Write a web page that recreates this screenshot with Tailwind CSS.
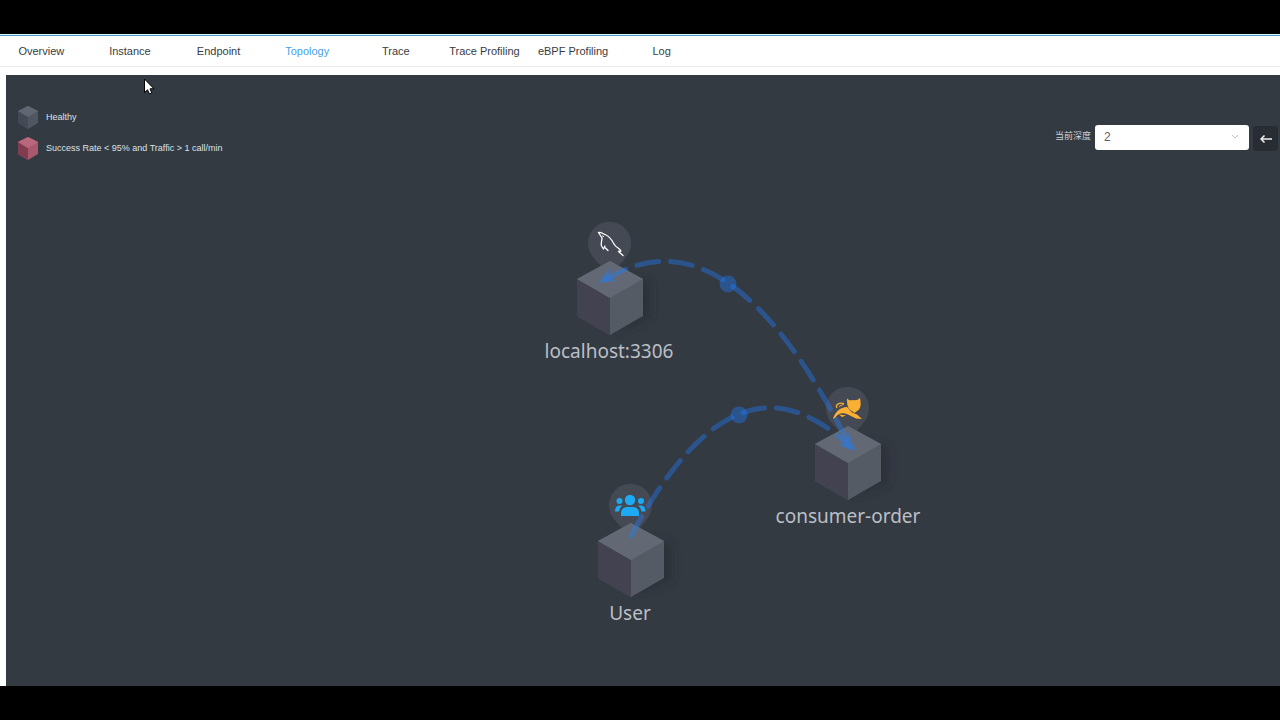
<!DOCTYPE html>
<html lang="en">
<head>
<meta charset="utf-8">
<meta name="viewport" content="width=device-width, initial-scale=1">
<title>Topology</title>
<script src="https://cdn.jsdelivr.net/npm/@tailwindcss/browser@4"></script>
</head>
<body class="bg-black font-['Liberation_Sans','Noto_Sans_CJK_SC',sans-serif]">
<div class="flex min-h-screen flex-col py-[34px]">
  <div class="flex flex-1 flex-col overflow-hidden border-t border-[#d5f5fa] bg-white">
    <nav class="border-t border-b border-t-[#4f9fca] border-b-[#e8eaec]">
      <div class="-ml-[3px] grid h-[30px] w-[709px] grid-cols-8 items-center text-center text-[11px] whitespace-nowrap text-[#383c42]">
        <a href="#">Overview</a>
        <a href="#">Instance</a>
        <a href="#">Endpoint</a>
        <a href="#" class="text-[#4a9fe8]" aria-current="page">Topology</a>
        <a href="#">Trace</a>
        <a href="#">Trace Profiling</a>
        <a href="#">eBPF Profiling</a>
        <a href="#">Log</a>
      </div>
    </nav>

    <main class="relative mt-2 ml-[6px] flex-1 bg-[#333a42]">
      <!-- Topology canvas -->
      <svg class="absolute inset-0 h-full w-full" role="img" aria-label="Service topology">
        <defs>
          <filter id="soft" x="-50%" y="-50%" width="200%" height="200%"><feGaussianBlur stdDeviation="4"/></filter>
          <g id="node">
            <path d="M8 -22L40 -17V20L8 33Z" fill="#292d36" opacity=".75" filter="url(#soft)"/>
            <path d="M0 -22C-5 -30 -12 -34 -17 -41A21.500 21.500 0 1 1 16 -41C12 -34 5 -30 0 -22Z" fill="#454953"/>
            <path d="M0 -37L33 -19V18L0 37L-33 18V-19Z" fill="#555b65"/>
            <path d="M-33 -19L0 0V37L-33 18Z" fill="#434251"/>
            <path d="M0 -37L33 -19L0 0L-33 -19Z" fill="#626974"/>
          </g>
        </defs>
        <g transform="translate(-6 -75)">
          <use href="#node" x="610" y="298"/>
          <use href="#node" x="848" y="463"/>
          <use href="#node" x="631" y="560"/>

          <!-- Database icon -->
          <g fill="none" stroke="#fff" stroke-width="1.300" stroke-linecap="round" stroke-linejoin="round">
            <path d="M598.500 232.500C601 231.500 603 234 605 234.500C609 236 612 240 614 244C616 248 620 248 621 251L618.500 251.500L623 255.500"/>
            <path d="M598.500 232.500L602 238C602 241 600.500 243 601.500 246L603.500 249L605 246M605.500 248L608 250.500"/>
            <path d="M602.500 236L603.500 236.500" stroke-width="1"/>
          </g>
          <!-- Application icon -->
          <g fill="#fbb034">
            <path d="M847 398.500C849 400.500 851 400.500 853 400C856 400.500 858 400 860 398C861 403 861 407 859 409.500L854.500 413L849 409C847 406 847 402 847 398.500Z"/>
            <path d="M833 419C835 412 840 407 847 407L852 412.500L857 414.500L862 419L856 418.500L849 415C843 412 838 413 835 418Z"/>
            <path d="M837 408C835 405 839 402 844 403.500" fill="none" stroke="#fbb034" stroke-width="1.200"/>
            <path d="M839 406.500L844 404" stroke="#fbb034" stroke-width="1"/>
            <path d="M839 414.500L846 415.500L842 417Z"/>
          </g>
          <!-- User group icon -->
          <g fill="#1daaf4">
            <circle cx="630" cy="500" r="5.200"/>
            <circle cx="619.500" cy="501" r="3"/>
            <circle cx="641" cy="501" r="3"/>
            <path d="M621 516V513C621 509 624 507 627 507H633C636 507 639 509 639 513V516Z"/>
            <path d="M615 511.500C615 507.500 617 505.500 619 505.500H622.500C620.500 507 619.500 509 619 511.500Z"/>
            <path d="M645.500 511.500C645.500 507.500 643.500 505.500 641.500 505.500H638C640 507 641 509 641.500 511.500Z"/>
          </g>

          <!-- Calls -->
          <g fill="none" stroke="#217efd" stroke-opacity=".4" stroke-width="5" stroke-linecap="round" stroke-dasharray="22 12">
            <path d="M852 450Q729 202 605 280" stroke-dashoffset="22"/>
            <path d="M631 536Q737 337 850 447"/>
          </g>
          <g fill="#217efd" fill-opacity=".4">
            <path d="M598 283L609 268L609 275L616 281Z"/>
            <path d="M856 451L839 446L846 441L848 431Z"/>
            <circle cx="728" cy="284" r="8.500"/>
            <circle cx="739" cy="415" r="8.500"/>
          </g>

          <g fill="#bbbfc5" font-family="'Noto Sans', 'Open Sans', sans-serif" font-size="19" text-anchor="middle">
            <text x="609" y="358">localhost:3306</text>
            <text x="848" y="523">consumer-order</text>
            <text x="630" y="620">User</text>
          </g>
        </g>
      </svg>

      <div class="relative flex items-start justify-between">
        <ul class="flex flex-col gap-2 pt-[31px] pl-3 text-[9px] text-[#dfe1e4]">
          <li class="flex h-[23px] items-center gap-2">
            <svg class="h-[23px] w-5" viewBox="0 0 20 23" aria-hidden="true"><path d="M10 0L20 5V17L10 23L0 17V5Z" fill="#505762"/><path d="M0 5L10 11V23L0 17Z" fill="#434955"/><path d="M10 0L20 5L10 11L0 5Z" fill="#606772"/></svg>
            Healthy
          </li>
          <li class="flex h-[23px] items-center gap-2">
            <svg class="h-[23px] w-5" viewBox="0 0 20 23" aria-hidden="true"><path d="M10 0L20 5V17L10 23L0 17V5Z" fill="#a9586d"/><path d="M0 5L10 11V23L0 17Z" fill="#823c50"/><path d="M10 0L20 5L10 11L0 5Z" fill="#b9677c"/></svg>
            Success Rate &lt; 95% and Traffic &gt; 1 call/min
          </li>
        </ul>

        <div class="flex items-center pt-12 pr-0.5">
          <label for="depth" class="mr-1 text-[9px] text-[#d0d3d8]">当前深度</label>
          <div class="relative">
            <select id="depth" class="h-[25px] w-[154px] appearance-none rounded-[3px] bg-white px-[9px] text-[12px] text-[#606266]">
              <option>1</option>
              <option selected>2</option>
              <option>3</option>
            </select>
            <svg class="pointer-events-none absolute top-[10px] right-[10px] h-[6px] w-2" viewBox="0 0 8 6" fill="none" stroke="#c0c4cc" aria-hidden="true"><path d="M1 1L4 4L7 1"/></svg>
          </div>
          <button type="button" aria-label="Back" class="mt-[3px] ml-1 flex h-[25px] w-[25px] items-center justify-center rounded-[3px] bg-[#282c33] text-[#eeeeee]">
            <svg class="h-[8px] w-[12px]" viewBox="0 0 12 8" fill="none" stroke="currentColor" stroke-width="1.500" aria-hidden="true"><path d="M12 4H1M4.500 .5L1 4L4.500 7.500"/></svg>
          </button>
        </div>
      </div>

      <!-- Mouse pointer -->
      <svg class="absolute top-[3px] left-[137px] h-[18px] w-[12px]" viewBox="0 0 12 18" aria-hidden="true"><path d="M1.500 1V14.500L4.500 11.800L6.500 16L8.800 15L7 10.800H11Z" fill="#fff" stroke="#000"/></svg>
    </main>
  </div>
</div>
</body>
</html>
